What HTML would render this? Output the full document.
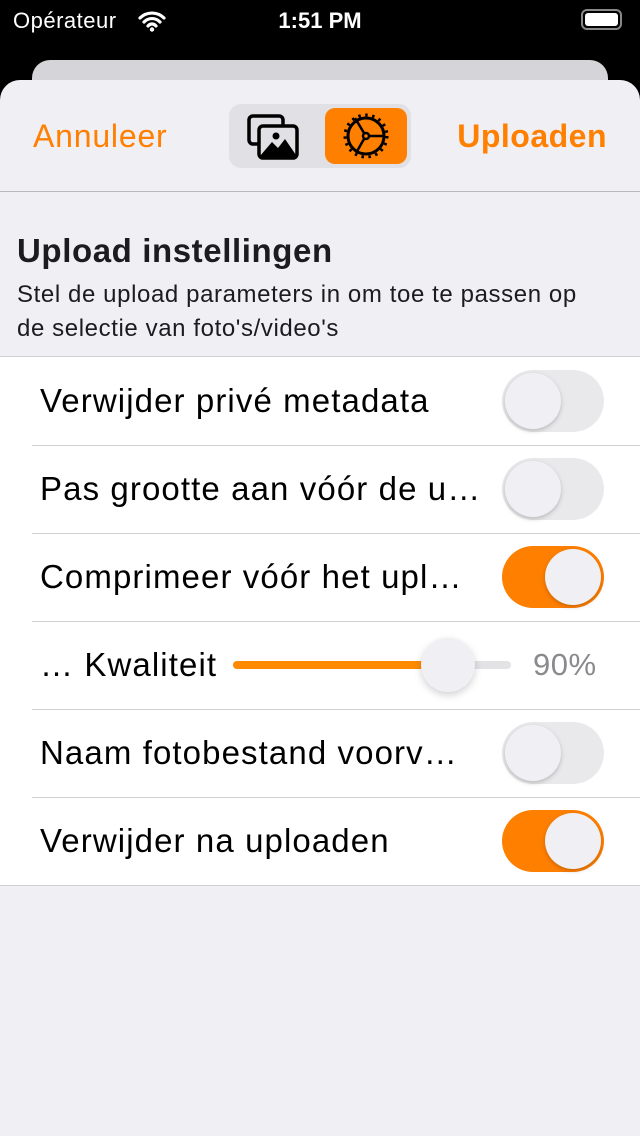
<!DOCTYPE html><html><head><meta charset="utf-8"><style>
*{margin:0;padding:0;box-sizing:border-box}
body{width:640px;height:1136px;background:#000;font-family:"Liberation Sans",sans-serif;position:relative;overflow:hidden}
.sb{position:absolute;top:0;left:0;width:640px;height:40px;color:#fff;font-size:22px}
.back{position:absolute;top:60px;left:32px;width:576px;height:60px;background:#d4d4d9;border-radius:18px}
.sheet{position:absolute;top:80px;left:0;width:640px;height:1056px;background:#f0eff4;border-radius:20px 20px 0 0}
.nav{position:absolute;top:0;left:0;width:640px;height:112px;border-bottom:1.5px solid #b9b9bd}
.o{color:#ff7f00;font-size:32px;position:absolute;top:38px}
.seg{position:absolute;left:229px;top:24px;width:182px;height:64px;background:#e0e0e5;border-radius:12px}
.sel{position:absolute;left:96px;top:4px;width:82px;height:56px;background:#ff7f00;border-radius:10px}
.tbl{position:absolute;top:276px;left:0;width:640px;background:#fff;border-top:1px solid #d0d0d4;border-bottom:1px solid #d0d0d4}
.row{height:88px;position:relative;font-size:33px;letter-spacing:1.1px;color:#000;line-height:88px;padding-left:40px;white-space:nowrap}
.row+.row:before{content:"";position:absolute;left:32px;right:0;top:0;border-top:1px solid #d0d0d4}
.sw{position:absolute;left:502px;top:13px;width:102px;height:62px;border-radius:31px;background:#e9e9eb}
.sw i{position:absolute;left:3px;top:3px;width:56px;height:56px;border-radius:50%;background:#efeff4;box-shadow:0 2px 5px rgba(0,0,0,.2)}
.sw.on{background:#ff7f00}.sw.on i{left:43px}
</style></head><body>
<div class="sb"><span style="position:absolute;left:13px;top:8px;letter-spacing:0.5px">Opérateur</span>
<svg style="position:absolute;left:138px;top:10px" width="28" height="22" viewBox="0 0 28 22"><path d="M2 8a17 17 0 0 1 24 0M6 12a11 11 0 0 1 16 0M10 16a5 5 0 0 1 8 0" stroke="#fff" stroke-width="3.2" fill="none" stroke-linecap="round"/><circle cx="14" cy="19.5" r="2.2" fill="#fff"/></svg>
<span style="position:absolute;left:0;width:640px;text-align:center;top:8px;font-weight:bold">1:51 PM</span>
<div style="position:absolute;left:581px;top:9px;width:41px;height:21px;border:2px solid #888;border-radius:6px;padding:2px"><div style="background:#fff;width:100%;height:100%;border-radius:3px"></div></div></div>
<div class="back"></div>
<div class="sheet">
<div class="nav"><span class="o" style="left:33px;letter-spacing:0.8px">Annuleer</span><span class="o" style="right:33px;font-weight:bold;letter-spacing:0.5px">Uploaden</span>
<div class="seg">
<svg style="position:absolute;left:17px;top:10px" width="56" height="46" viewBox="0 0 56 46"><rect x="3" y="2" width="34" height="28" rx="4" fill="none" stroke="#000" stroke-width="3.5"/><rect x="13" y="12" width="38" height="32" rx="4" fill="#e0e0e5" stroke="#000" stroke-width="3.5"/><path d="M14 42L26 28l6 6 7-9 11 16v2H14z" fill="#000"/><circle cx="30" cy="22" r="3.5" fill="#000"/></svg>
<div class="sel"><svg style="position:absolute;left:15px;top:4px" width="52" height="48" viewBox="0 0 52 48"><circle cx="26" cy="24" r="18" fill="none" stroke="#000" stroke-width="3"/><g stroke="#000" stroke-width="3" stroke-dasharray="2.5 4.5"><circle cx="26" cy="24" r="21" fill="none"/></g><circle cx="26" cy="24" r="3" fill="none" stroke="#000" stroke-width="2.5"/><path d="M29 24h15M24 21l-9-15M24 27l-8 14" stroke="#000" stroke-width="2.5"/></svg></div></div></div>
<div style="position:absolute;left:17px;top:152px;font-size:33px;letter-spacing:0.6px;font-weight:bold;color:#1c1c1e">Upload instellingen</div>
<div style="position:absolute;left:17px;top:198px;width:610px;font-size:24px;letter-spacing:0.6px;line-height:34px;color:#1c1c1e">Stel de upload parameters in om toe te passen op<br>de selectie van foto's/video's</div>
<div class="tbl">
<div class="row">Verwijder privé metadata<div class="sw"><i></i></div></div>
<div class="row">Pas grootte aan vóór de u…<div class="sw"><i></i></div></div>
<div class="row">Comprimeer vóór het upl…<div class="sw on"><i></i></div></div>
<div class="row">… Kwaliteit<div style="position:absolute;left:233px;top:40px;width:278px;height:8px;border-radius:4px;background:#e3e3e6"><div style="width:205px;height:8px;border-radius:4px;background:#ff8a00"></div></div><div style="position:absolute;left:421px;top:17px;width:54px;height:54px;border-radius:50%;background:#efeff4;box-shadow:0 3px 8px rgba(0,0,0,.18)"></div><span style="position:absolute;left:533px;color:#8a8a8e;font-size:31px;letter-spacing:0.5px">90%</span></div>
<div class="row">Naam fotobestand voorv…<div class="sw"><i></i></div></div>
<div class="row">Verwijder na uploaden<div class="sw on"><i></i></div></div>
</div></div>
</body></html>
